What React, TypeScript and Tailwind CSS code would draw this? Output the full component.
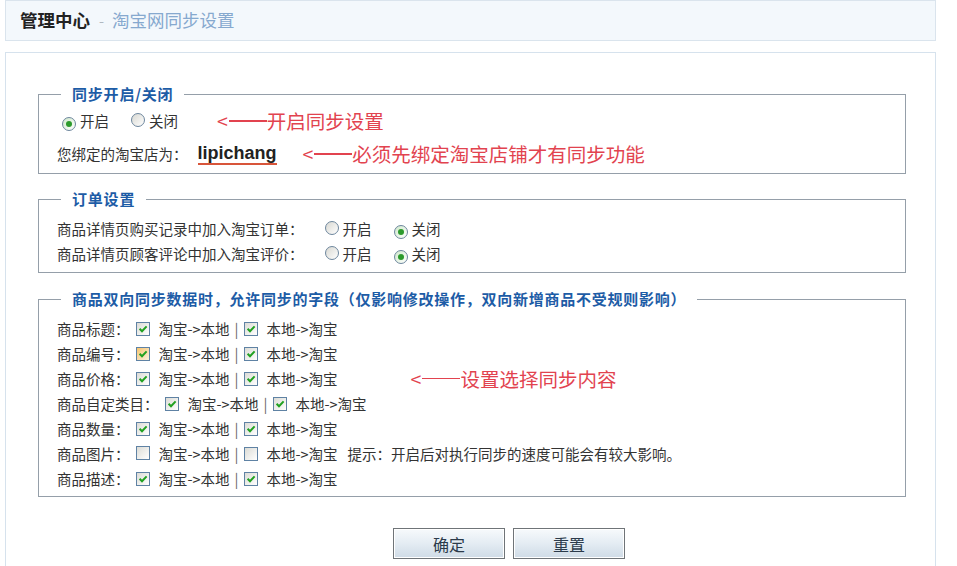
import type { ReactNode } from "react";

function Radio({ checked }: { checked?: boolean }) {
  return (
    <span
      className={
        "inline-flex w-[14px] h-[14px] shrink-0 items-center justify-center rounded-full border border-[#6d869d] " +
        (checked ? "bg-gradient-to-br from-[#cfe8cb] to-white" : "bg-gradient-to-br from-[#d8d8d2] to-white")
      }
    >
      {checked && <span className="w-[6px] h-[6px] rounded-full bg-[#2c9a2c]" />}
    </span>
  );
}

function Check({ checked, hot }: { checked?: boolean; hot?: boolean }) {
  return (
    <span
      className={
        "inline-flex w-[14px] h-[14px] shrink-0 items-center justify-center border border-[#5f82a4] " +
        (hot ? "bg-gradient-to-br from-[#f9c56a] to-[#f8f0de]" : "bg-gradient-to-br from-[#dcdcd6] to-white")
      }
    >
      {checked && (
        <svg width="12" height="12" viewBox="0 0 12 12">
          <path d="M2.6 5.8 L5 8.2 L9.6 3.4" fill="none" stroke="#21a121" strokeWidth="2" />
        </svg>
      )}
    </span>
  );
}

function Group({ title, wide, children }: { title: string; wide?: boolean; children: ReactNode }) {
  return (
    <fieldset className="ml-[32px] w-[868px] border border-[#959fa9] pl-[18px] pr-0 pt-0 m-0 min-w-0">
      <legend
        className={
          "ml-[4px] px-[11px] h-[20px] leading-[20px] text-[15px] font-bold text-[#1d5ca6] " +
          (wide ? "tracking-[0.75px]" : "tracking-[0.8px]")
        }
      >
        {title}
      </legend>
      {children}
    </fieldset>
  );
}

// red hint: "<" + long rule + text
function Note({ children, className }: { children: ReactNode; className: string }) {
  return (
    <span className={"inline-flex items-center text-[19.5px] text-[#e2434f] whitespace-nowrap " + className}>
      <span>&lt;</span>
      <span className="ml-[1px] w-[38px] h-[1.5px] bg-[#e2434f]" />
      <span>{children}</span>
    </span>
  );
}

function SyncRow({
  label,
  on = true,
  hot,
  extra,
}: {
  label: string;
  on?: boolean;
  hot?: boolean;
  extra?: ReactNode;
}) {
  return (
    <div className="flex items-center h-[25px] whitespace-nowrap">
      <span>{label}</span>
      <span className="ml-[6px]">
        <Check checked={on} hot={hot} />
      </span>
      <span className="ml-[9px]">淘宝-&gt;本地</span>
      <span className="mx-[5px] text-[#666]">|</span>
      <Check checked={on} />
      <span className="ml-[9px]">本地-&gt;淘宝</span>
      {extra}
    </div>
  );
}

function Btn({ children }: { children: ReactNode }) {
  return (
    <button className="w-[112px] h-[31px] border border-[#6f7478] bg-gradient-to-b from-[#f7fafc] via-[#e4ecf3] to-[#cfdbe6] shadow-[inset_0_0_0_1px_#ffffff] text-[16px] text-[#2b3a4a]">
      {children}
    </button>
  );
}

export default function App() {
  return (
    <div className="w-[957px] h-[566px] overflow-hidden bg-white text-[14.5px] text-[#333] font-['Noto_Sans_CJK_SC','Noto_Sans',sans-serif]">
      <div className="ml-[5px] w-[931px] h-[41px] bg-[#f3f8fc] border border-[#dae4ed] flex items-center pl-[14px]">
        <span className="text-[17.5px] font-bold text-[#222]">管理中心</span>
        <span className="ml-[9px] text-[#b0b8c0]">-</span>
        <span className="ml-[8px] text-[17.5px] text-[#86a9cf]">淘宝网同步设置</span>
      </div>

      <div className="ml-[5px] mt-[11px] w-[931px] h-[600px] border-l border-t border-r border-[#d6e2ed] pt-[31px]">
        <Group title="同步开启/关闭">
          <div className="flex items-center h-[32px] pt-[2px] whitespace-nowrap">
            <span className="ml-[5px]">
              <Radio checked />
            </span>
            <span className="ml-[4px]">开启</span>
            <span className="ml-[22px]">
              <Radio />
            </span>
            <span className="ml-[4px]">关闭</span>
            <Note className="ml-[39px]">开启同步设置</Note>
          </div>
          <div className="flex items-center h-[37px] pb-[1px] whitespace-nowrap">
            <span>您绑定的淘宝店为：</span>
            <span className="ml-[10px] font-['Liberation_Sans',sans-serif] font-bold text-[18px] text-[#222] border-b-2 border-[#d8553a] leading-[20px]">
              lipichang
            </span>
            <Note className="ml-[26px]">必须先绑定淘宝店铺才有同步功能</Note>
          </div>
        </Group>

        <div className="h-[15px]" />

        <Group title="订单设置">
          <div className="pt-[7px] pb-[6px]">
            {["商品详情页购买记录中加入淘宝订单：", "商品详情页顾客评论中加入淘宝评价："].map((t) => (
              <div key={t} className="flex items-center h-[25px] whitespace-nowrap">
                <span>{t}</span>
                <span className="ml-[21px]">
                  <Radio />
                </span>
                <span className="ml-[4px]">开启</span>
                <span className="ml-[22px]">
                  <Radio checked />
                </span>
                <span className="ml-[4px]">关闭</span>
              </div>
            ))}
          </div>
        </Group>

        <div className="h-[16px]" />

        <Group title="商品双向同步数据时，允许同步的字段（仅影响修改操作，双向新增商品不受规则影响）" wide>
          <div className="pt-[7px] pb-[5px]">
            <SyncRow label="商品标题：" />
            <SyncRow label="商品编号：" hot />
            <SyncRow label="商品价格：" extra={<Note className="ml-[73px]">设置选择同步内容</Note>} />
            <SyncRow label="商品自定类目：" />
            <SyncRow label="商品数量：" />
            <SyncRow
              label="商品图片："
              on={false}
              extra={<span className="ml-[10px]">提示：开启后对执行同步的速度可能会有较大影响。</span>}
            />
            <SyncRow label="商品描述：" />
          </div>
        </Group>

        <div className="flex gap-[8px] pl-[387px] mt-[31px]">
          <Btn>确定</Btn>
          <Btn>重置</Btn>
        </div>
      </div>
    </div>
  );
}
